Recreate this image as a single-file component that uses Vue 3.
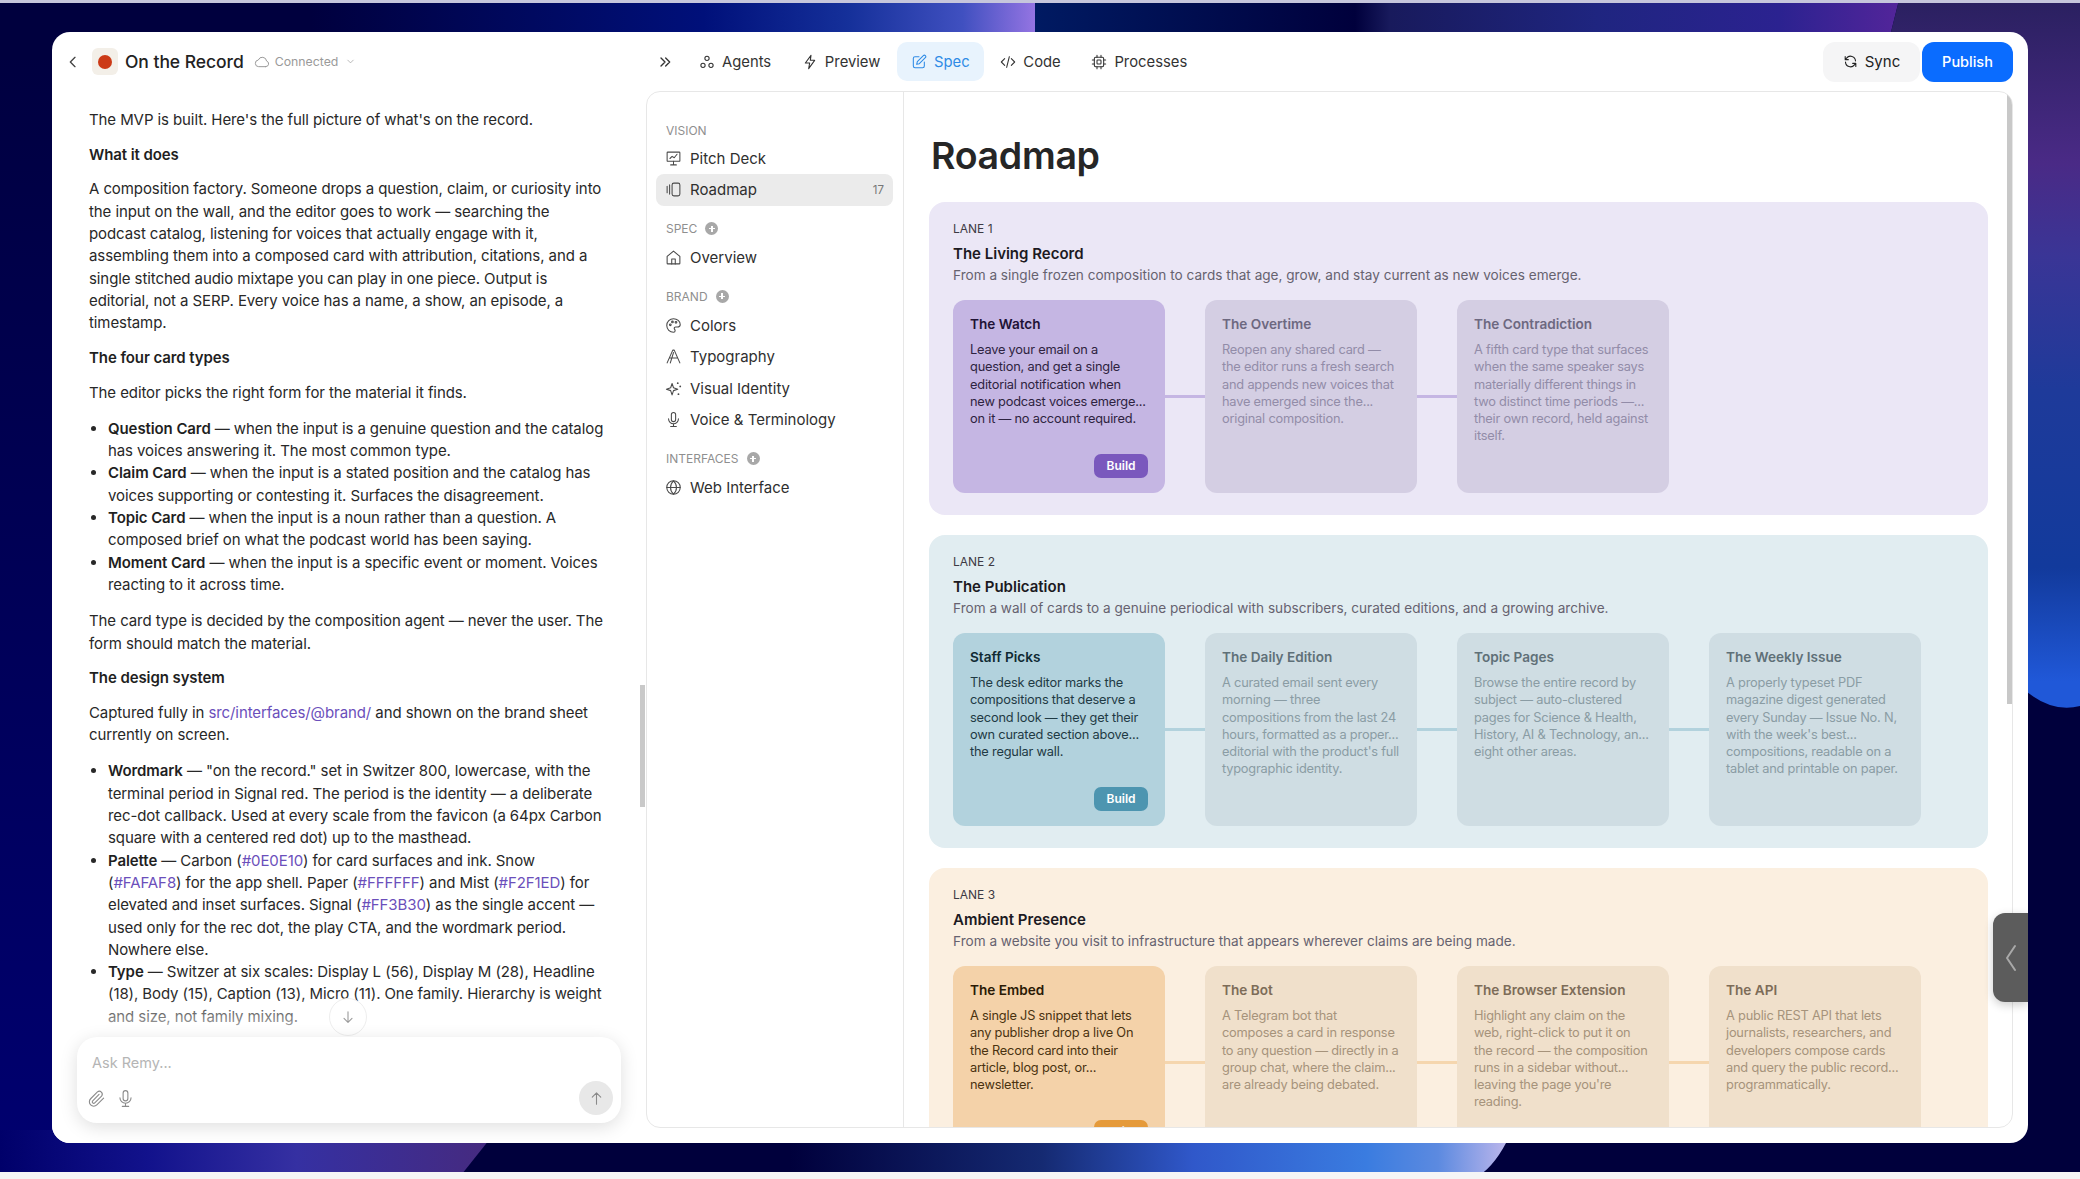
<template>
  <div class="page">
    <svg class="backdrop" viewBox="0 0 2080 1179" preserveAspectRatio="none" aria-hidden="true">
      <defs>
        <linearGradient id="topLeft" gradientUnits="userSpaceOnUse" x1="0" y1="0" x2="1035" y2="0">
          <stop offset="0" stop-color="#00003e" />
          <stop offset="0.3" stop-color="#00003e" />
          <stop offset="0.68" stop-color="#00107a" />
          <stop offset="0.82" stop-color="#15309a" />
          <stop offset="0.93" stop-color="#4050c0" />
          <stop offset="1" stop-color="#9474e2" />
        </linearGradient>
        <linearGradient id="topMid" gradientUnits="userSpaceOnUse" x1="1035" y1="0" x2="1900" y2="0">
          <stop offset="0" stop-color="#001a62" />
          <stop offset="0.37" stop-color="#00003c" />
          <stop offset="0.41" stop-color="#181a5c" />
          <stop offset="0.65" stop-color="#1f2580" />
          <stop offset="0.86" stop-color="#2b2290" />
          <stop offset="1" stop-color="#53259a" />
        </linearGradient>
        <linearGradient id="rightSide" gradientUnits="userSpaceOnUse" x1="0" y1="0" x2="0" y2="710">
          <stop offset="0" stop-color="#2a2060" />
          <stop offset="0.23" stop-color="#4a2a86" />
          <stop offset="0.36" stop-color="#3a3596" />
          <stop offset="0.55" stop-color="#1e3a9a" />
          <stop offset="0.8" stop-color="#123a9c" />
          <stop offset="0.96" stop-color="#2058d8" />
        </linearGradient>
        <linearGradient id="leftSide" gradientUnits="userSpaceOnUse" x1="0" y1="0" x2="0" y2="1179">
          <stop offset="0" stop-color="#00003e" />
          <stop offset="1" stop-color="#000070" />
        </linearGradient>
        <linearGradient id="botLeft" gradientUnits="userSpaceOnUse" x1="0" y1="0" x2="495" y2="0">
          <stop offset="0" stop-color="#00006a" />
          <stop offset="0.3" stop-color="#12128c" />
          <stop offset="0.6" stop-color="#3530a2" />
          <stop offset="1" stop-color="#462a7e" />
        </linearGradient>
        <linearGradient id="botMid" gradientUnits="userSpaceOnUse" x1="790" y1="0" x2="1510" y2="0">
          <stop offset="0" stop-color="#00003c" />
          <stop offset="0.35" stop-color="#152a72" />
          <stop offset="0.56" stop-color="#3058ca" />
          <stop offset="0.8" stop-color="#3a7ce0" />
          <stop offset="0.9" stop-color="#5c8ae0" />
          <stop offset="1" stop-color="#c0b8ec" />
        </linearGradient>
      </defs>
      <rect width="2080" height="1179" fill="#00003c" />
      <rect width="60" height="1179" fill="url(#leftSide)" />
      <path d="M0 0H1035V60H0Z" fill="url(#topLeft)" />
      <path d="M1035 0H1899L1884 60H1035Z" fill="url(#topMid)" />
      <path d="M1899 0H2080V706Q2050 714 2020 686V60H1884Z" fill="url(#rightSide)" />
      <path d="M0 1130H497L458 1179H0Z" fill="url(#botLeft)" />
      <path d="M790 1130H1512Q1510 1138 1506 1143Q1476 1200 1424 1179H790Z" fill="url(#botMid)" />
      <rect width="2080" height="3" fill="#c6c6dc" />
      <rect y="1172" width="2080" height="7" fill="#f5f5f6" />
    </svg>

    <div class="window">
      <section class="chat">
        <header class="chat-head">
          <svg class="back" viewBox="0 0 24 24"><path d="M15 5l-7 7 7 7" /></svg>
          <span class="logo"><i></i></span>
          <span class="project">On the Record</span>
          <span class="status">
            <svg viewBox="0 0 24 24"><path d="M17.5 19H7a5 5 0 0 1-.6-9.96A6.5 6.5 0 0 1 18.9 10.6 4.3 4.3 0 0 1 17.5 19z" /></svg>
            Connected
            <svg class="caret" viewBox="0 0 24 24"><path d="M6 9l6 6 6-6" /></svg>
          </span>
        </header>

        <div class="messages">
          <p>The MVP is built. Here's the full picture of what's on the record.</p>
          <p><b>What it does</b></p>
          <p>A composition factory. Someone drops a question, claim, or curiosity into the input on the wall, and the editor goes to work — searching the podcast catalog, listening for voices that actually engage with it, assembling them into a composed card with attribution, citations, and a single stitched audio mixtape you can play in one piece. Output is editorial, not a SERP. Every voice has a name, a show, an episode, a timestamp.</p>
          <p><b>The four card types</b></p>
          <p>The editor picks the right form for the material it finds.</p>
          <ul>
            <li><b>Question Card</b> — when the input is a genuine question and the catalog has voices answering it. The most common type.</li>
            <li><b>Claim Card</b> — when the input is a stated position and the catalog has voices supporting or contesting it. Surfaces the disagreement.</li>
            <li><b>Topic Card</b> — when the input is a noun rather than a question. A composed brief on what the podcast world has been saying.</li>
            <li><b>Moment Card</b> — when the input is a specific event or moment. Voices reacting to it across time.</li>
          </ul>
          <p>The card type is decided by the composition agent — never the user. The form should match the material.</p>
          <p><b>The design system</b></p>
          <p>Captured fully in <a>src/interfaces/@brand/</a> and shown on the brand sheet currently on screen.</p>
          <ul>
            <li><b>Wordmark</b> — "on the record." set in Switzer 800, lowercase, with the terminal period in Signal red. The period is the identity — a deliberate rec-dot callback. Used at every scale from the favicon (a 64px Carbon square with a centered red dot) up to the masthead.</li>
            <li><b>Palette</b> — Carbon (<a>#0E0E10</a>) for card surfaces and ink. Snow (<a>#FAFAF8</a>) for the app shell. Paper (<a>#FFFFFF</a>) and Mist (<a>#F2F1ED</a>) for elevated and inset surfaces. Signal (<a>#FF3B30</a>) as the single accent — used only for the rec dot, the play CTA, and the wordmark period. Nowhere else.</li>
            <li><b>Type</b> — Switzer at six scales: Display L (56), Display M (28), Headline (18), Body (15), Caption (13), Micro (11). One family. Hierarchy is weight and size, not family mixing.</li>
          </ul>
        </div>

        <div class="fade"></div>
        <div class="chat-scroll"></div>
        <button class="jump">
          <svg viewBox="0 0 24 24"><path d="M12 4v16M6 14l6 6 6-6" /></svg>
        </button>

        <div class="composer">
          <div class="placeholder">Ask Remy...</div>
          <div class="composer-row">
            <svg viewBox="0 0 24 24"><path d="M21 11.500l-8.600 8.600a5.500 5.500 0 0 1-7.800-7.800l8.600-8.600a3.700 3.700 0 0 1 5.200 5.200l-8.600 8.600a1.800 1.800 0 0 1-2.600-2.600l8-8" /></svg>
            <svg viewBox="0 0 24 24"><rect x="9" y="2" width="6" height="13" rx="3" /><path d="M5 11a7 7 0 0 0 14 0M12 18v4M8 22h8" /></svg>
            <span class="send"><svg viewBox="0 0 24 24"><path d="M12 20V4M6 10l6-6 6 6" /></svg></span>
          </div>
        </div>
      </section>

      <section class="work">
        <nav class="tabs">
          <svg class="collapse" viewBox="0 0 24 24"><path d="M6 6l6 6-6 6M13 6l6 6-6 6" /></svg>
          <a v-for="t in tabs" :key="t.name" class="tab" :class="{ on: t.name === 'Spec' }">
            <svg viewBox="0 0 24 24" v-html="t.icon"></svg>
            {{ t.name }}
          </a>
          <span class="grow"></span>
          <button class="sync">
            <svg viewBox="0 0 24 24"><path d="M20 11a8 8 0 0 0-14.300-4.400L3.500 9M3.500 4v5h5M4 13a8 8 0 0 0 14.300 4.400l2.200-2.400M20.500 20v-5h-5" /></svg>
            Sync
          </button>
          <button class="publish">Publish</button>
        </nav>

        <div class="panel">
          <aside class="side">
            <div v-for="g in groups" :key="g.name" class="group">
              <div class="group-name">
                {{ g.name }}
                <span v-if="g.plus" class="plus"></span>
              </div>
              <a v-for="it in g.items" :key="it.name" class="item" :class="{ on: it.count }">
                <svg viewBox="0 0 24 24" v-html="it.icon"></svg>
                {{ it.name }}
                <em v-if="it.count">{{ it.count }}</em>
              </a>
            </div>
          </aside>

          <main class="doc">
            <h1>Roadmap</h1>
            <section v-for="l in lanes" :key="l.label" class="lane" :class="l.tone">
              <div class="lane-label">{{ l.label }}</div>
              <h2>{{ l.title }}</h2>
              <p class="lane-desc">{{ l.desc }}</p>
              <div class="cards">
                <article v-for="(c, i) in l.cards" :key="c.title" class="card" :class="{ now: i === 0 }">
                  <h3>{{ c.title }}</h3>
                  <p>{{ c.text }}</p>
                  <span v-if="i === 0" class="badge">Build</span>
                </article>
              </div>
            </section>
          </main>
          <div class="doc-scroll"></div>
        </div>
      </section>

      <div class="handle">
        <svg viewBox="0 0 12 28"><path d="M10 2L2 14l8 12" /></svg>
      </div>
    </div>
  </div>
</template>

<script setup>
const icons = {
  agents: '<circle cx="12" cy="6.5" r="3.2"/><circle cx="6" cy="17" r="3.2"/><circle cx="18" cy="17" r="3.2"/>',
  zap: '<path d="M13.5 2L5 13.5h6.5L10 22l9-12.5h-6.5z"/>',
  pen: '<path d="M12 4H6a2.5 2.5 0 0 0-2.5 2.5V18A2.5 2.5 0 0 0 6 20.500h11.500A2.500 2.500 0 0 0 20 18v-6"/><path d="M18.500 2.500a2.100 2.100 0 0 1 3 3L12.500 14.500l-4 1 1-4z"/>',
  code: '<path d="M7 7l-5 5 5 5M17 7l5 5-5 5M14 4l-4 16"/>',
  cpu: '<rect x="5" y="5" width="14" height="14" rx="2"/><rect x="9" y="9" width="6" height="6" rx="1"/><path d="M9 2v3M15 2v3M9 19v3M15 19v3M2 9h3M2 15h3M19 9h3M19 15h3"/>',
  deck: '<rect x="3" y="3" width="18" height="13" rx="1"/><path d="M7 12l3-3 3 2 4-5M12 16v5M8 21h8"/>',
  road: '<path d="M3 7.500v9M6.500 5.500v13"/><rect x="10" y="3" width="11" height="18" rx="2.500"/>',
  home: '<path d="M3 10.500L12 3l9 7.500V20a1 1 0 0 1-1 1H4a1 1 0 0 1-1-1z"/><path d="M9.500 21v-7h5v7"/>',
  palette: '<path d="M12 2.500a9.500 9.500 0 0 0 0 19c1.500 0 2.300-1 2.300-2.200 0-1.600-1.300-2-1.300-3.300 0-1.100.9-1.800 2-1.800h2.500c2.300 0 4-1.700 4-3.700C21.500 6 17.200 2.500 12 2.500z"/><circle cx="7.500" cy="11" r="1.200"/><circle cx="10.500" cy="7" r="1.200"/><circle cx="15.500" cy="7.500" r="1.200"/>',
  type: '<path d="M3 21L11 3h2l8 18M7 14h10M12 6.500L7.500 21"/>',
  spark: '<path d="M10 5l2 6 6 2-6 2-2 6-2-6-6-2 6-2z"/><path d="M18 4.500v.01M21.500 9v.01M19 20v.01" stroke-width="2.600"/>',
  mic: '<rect x="9" y="2" width="6" height="13" rx="3"/><path d="M5 11a7 7 0 0 0 14 0M12 18v4M8 22h8"/>',
  globe: '<circle cx="12" cy="12" r="9.500"/><path d="M2.500 12h19M12 2.500c3 2.800 4.200 6 4.200 9.500s-1.200 6.700-4.200 9.500c-3-2.800-4.200-6-4.200-9.500s1.200-6.700 4.200-9.500z"/>'
}

const tabs = [
  { name: 'Agents', icon: icons.agents },
  { name: 'Preview', icon: icons.zap },
  { name: 'Spec', icon: icons.pen },
  { name: 'Code', icon: icons.code },
  { name: 'Processes', icon: icons.cpu }
]

const groups = [
  { name: 'VISION', items: [{ name: 'Pitch Deck', icon: icons.deck }, { name: 'Roadmap', icon: icons.road, count: 17 }] },
  { name: 'SPEC', plus: true, items: [{ name: 'Overview', icon: icons.home }] },
  {
    name: 'BRAND',
    plus: true,
    items: [
      { name: 'Colors', icon: icons.palette },
      { name: 'Typography', icon: icons.type },
      { name: 'Visual Identity', icon: icons.spark },
      { name: 'Voice & Terminology', icon: icons.mic }
    ]
  },
  { name: 'INTERFACES', plus: true, items: [{ name: 'Web Interface', icon: icons.globe }] }
]

const lanes = [
  {
    label: 'LANE 1',
    tone: 'violet',
    title: 'The Living Record',
    desc: 'From a single frozen composition to cards that age, grow, and stay current as new voices emerge.',
    cards: [
      { title: 'The Watch', text: 'Leave your email on a question, and get a single editorial notification when new podcast voices emerge... on it — no account required.' },
      { title: 'The Overtime', text: 'Reopen any shared card — the editor runs a fresh search and appends new voices that have emerged since the... original composition.' },
      { title: 'The Contradiction', text: 'A fifth card type that surfaces when the same speaker says materially different things in two distinct time periods —... their own record, held against itself.' }
    ]
  },
  {
    label: 'LANE 2',
    tone: 'teal',
    title: 'The Publication',
    desc: 'From a wall of cards to a genuine periodical with subscribers, curated editions, and a growing archive.',
    cards: [
      { title: 'Staff Picks', text: 'The desk editor marks the compositions that deserve a second look — they get their own curated section above... the regular wall.' },
      { title: 'The Daily Edition', text: "A curated email sent every morning — three compositions from the last 24 hours, formatted as a proper... editorial with the product's full typographic identity." },
      { title: 'Topic Pages', text: 'Browse the entire record by subject — auto-clustered pages for Science & Health, History, AI & Technology, an... eight other areas.' },
      { title: 'The Weekly Issue', text: "A properly typeset PDF magazine digest generated every Sunday — Issue No. N, with the week's best... compositions, readable on a tablet and printable on paper." }
    ]
  },
  {
    label: 'LANE 3',
    tone: 'amber',
    title: 'Ambient Presence',
    desc: 'From a website you visit to infrastructure that appears wherever claims are being made.',
    cards: [
      { title: 'The Embed', text: 'A single JS snippet that lets any publisher drop a live On the Record card into their article, blog post, or... newsletter.' },
      { title: 'The Bot', text: 'A Telegram bot that composes a card in response to any question — directly in a group chat, where the claim... are already being debated.' },
      { title: 'The Browser Extension', text: "Highlight any claim on the web, right-click to put it on the record — the composition runs in a sidebar without... leaving the page you're reading." },
      { title: 'The API', text: 'A public REST API that lets journalists, researchers, and developers compose cards and query the public record... programmatically.' }
    ]
  }
]
</script>

<style scoped>
.page { position:relative; width:2080px; height:1179px; padding:32px 52px 36px; box-sizing:border-box; overflow:hidden;
  font-family:Inter, "Liberation Sans", sans-serif; color:#2b2b2b }
.backdrop { position:absolute; inset:0; width:100%; height:100%; stroke:none }
.window { position:relative; display:flex; height:100%; background:#fff; border-radius:18px; overflow:hidden }
svg { fill:none; stroke:currentColor; stroke-width:1.6; stroke-linecap:round; stroke-linejoin:round; flex:none }
.backdrop { stroke:none }

.chat { position:relative; width:594px; flex:none; overflow:hidden }
.chat-head { display:flex; align-items:center; height:59px; padding-left:13px; box-sizing:border-box }
.back { width:16px; height:16px; color:#444; stroke-width:2 }
.logo { display:flex; align-items:center; justify-content:center; width:26px; height:27px; margin-left:11px; background:#f3efe8; border-radius:6px }
.logo i { width:14px; height:14px; background:#cc3a17; border-radius:50% }
.project { margin-left:7px; font-size:17.500px; font-weight:500; color:#222; letter-spacing:-.05px }
.status { display:flex; align-items:center; gap:5px; margin-left:10px; font-size:12.300px; color:#9a9a9a }
.status svg { width:16px; height:16px; stroke-width:1.5 }
.status .caret { width:11px; height:11px; margin-left:2px }

.messages { width:521px; padding:18px 0 0 37px; font-size:15px; line-height:22.300px; letter-spacing:-.09px; color:#282828 }
.messages p { margin:0 0 12.400px }
.messages b { font-weight:600; color:#1f1f1f }
.messages a { color:#6b4fbb }
.messages ul { margin:14px 0; padding-left:19px }

.fade { position:absolute; left:0; right:0; bottom:0; height:148px;
  background:linear-gradient(to bottom, rgba(255,255,255,0), #fff 38%) }
.chat-scroll { position:absolute; left:588px; top:653px; width:5px; height:122px; background:#c9c9c9 }
.jump { position:absolute; left:277px; top:966px; display:flex; align-items:center; justify-content:center; width:38px; height:38px; padding:0;
  background:rgba(255,255,255,.75); border:1px solid #eee; border-radius:50%; color:#999 }
.jump svg { width:16px; height:16px }

.composer { position:absolute; left:25px; bottom:20px; width:544px; height:86px; box-sizing:border-box; padding:17px 8px 7px 15px;
  background:#fff; border-radius:20px; box-shadow:0 4px 18px rgba(0,0,0,.13) }
.placeholder { font-size:14.500px; line-height:18px; color:#b5b5b5 }
.composer-row { display:flex; align-items:center; gap:10px; margin:9px 0 0 -5px; color:#8b8b8b }
.composer-row > svg { width:19px; height:19px; stroke-width:1.4 }
.send { display:flex; align-items:center; justify-content:center; width:34px; height:34px; margin-left:auto; background:#e8e8e8; border-radius:50%; color:#8a8a8a }
.send svg { width:17px; height:17px; stroke-width:1.5 }

.work { flex:1; display:flex; flex-direction:column; min-width:0; padding:0 15px 15px 0 }
.tabs { display:flex; align-items:center; height:59px; flex:none; box-sizing:border-box }
.collapse { width:16px; height:16px; margin:0 12px 0 11px; color:#333; stroke-width:2 }
.tab { display:flex; align-items:center; gap:7px; height:39px; padding:0 14px; margin-right:2.700px; font-size:14.800px; color:#333; border-radius:10px }
.tab svg { width:16px; height:16px; stroke-width:1.6 }
.tab.on { background:#e8f3fd; color:#2f8be6 }
.grow { flex:1 }
.sync { display:flex; align-items:center; gap:7px; width:97px; height:40px; justify-content:center; background:#f5f5f6; border:0; border-radius:12px;
  font:400 15px Inter, sans-serif; color:#222 }
.sync svg { width:15px; height:15px; stroke-width:1.7 }
.publish { width:91px; height:40px; margin-left:2px; background:#0a6cff; border:0; border-radius:12px; font:500 14.500px Inter, sans-serif; color:#fff }

.panel { position:relative; flex:1; display:flex; min-height:0; border:1px solid #e7e7e7; border-radius:14px; overflow:hidden }
.side { width:257px; flex:none; box-sizing:border-box; padding:30.500px 10px 0 9px; border-right:1px solid #e7e7e7 }
.group { margin-bottom:15px }
.group:first-child .group-name { margin-bottom:4px }
.group-name { display:flex; align-items:center; gap:8px; height:16px; margin:0 0 5px 10px; font-size:12px; color:#8f8f8f }
.plus { position:relative; width:13px; height:13px; background:#a8a8a8; border-radius:50% }
.plus::before { content:""; position:absolute; left:3.500px; top:5.750px; width:6px; height:1.500px; background:#fff }
.plus::after { content:""; position:absolute; left:5.750px; top:3.500px; width:1.500px; height:6px; background:#fff }
.item { display:flex; align-items:center; gap:8px; height:31.600px; padding:0 9px; font-size:15px; color:#2f2f2f; border-radius:8px }
.item svg { width:17px; height:17px; color:#4a4a4a; stroke-width:1.5 }
.item em { margin-left:auto; font-style:normal; font-size:11.500px; color:#777 }
.item.on { background:#ebebeb }

.doc { flex:1; min-width:0; padding:40px 24px 0 25px; overflow:hidden }
h1 { margin:0 0 22px 2px; font-size:37.500px; line-height:48px; font-weight:600; letter-spacing:-.3px; color:#262626 }
.lane { height:313px; box-sizing:border-box; padding:19px 24px 0; margin-bottom:20px; border-radius:16px }
.lane-label { font-size:12px; line-height:16px; color:#3d3a44 }
h2 { margin:8px 0 0; font-size:15px; line-height:18px; font-weight:600; color:#1c1a22 }
.lane-desc { margin:3px 0 0; font-size:13.600px; line-height:18px; color:#66626f }
.cards { display:flex; gap:40px; margin-top:16px }
.card { position:relative; width:212px; height:193px; flex:none; box-sizing:border-box; padding:15px 18px 0 17px; border-radius:12px; background:var(--dim) }
.card:not(:last-child)::after { content:""; position:absolute; left:100%; top:95px; width:40px; height:3px; background:var(--line) }
.card.now { background:var(--strong) }
h3 { margin:0; font-size:13.600px; line-height:18px; font-weight:600; color:var(--dim-title) }
.card p { margin:8px 0 0; font-size:12.800px; line-height:17.300px; letter-spacing:-.2px; color:var(--dim-text) }
.card.now h3 { color:var(--ink) }
.card.now p { color:var(--ink-soft) }
.badge { position:absolute; right:17px; bottom:15px; width:54px; height:24px; line-height:24px; text-align:center; background:var(--badge); border-radius:7px; font-size:12px; font-weight:600; color:#fff }

.violet { background:#ebe7f6; --dim:#d4cee3; --strong:#c5b6e3; --line:#c5b6e3; --badge:#7a58bd; --ink:#1f1235; --ink-soft:#2e2340; --dim-title:#6d6880; --dim-text:#928ca8 }
.teal { background:#e1edf1; --dim:#cfdde3; --strong:#b2d2dd; --line:#b2d2dd; --badge:#4d95b0; --ink:#0f2a33; --ink-soft:#1f3a44; --dim-title:#5f7078; --dim-text:#8a9ca4 }
.amber { background:#fbefe0; --dim:#f0e0cb; --strong:#f4d2a9; --line:#f5d6ae; --badge:#e59a3a; --ink:#2a1a05; --ink-soft:#4a3210; --dim-title:#7d6c58; --dim-text:#a6937b }

.doc-scroll { position:absolute; right:0; top:0; width:5px; height:612px; background:#c8c8c8 }

.handle { position:absolute; right:0; top:881px; display:flex; align-items:center; justify-content:center; width:35px; height:89px; background:#5c5c5c;
  border-radius:12px 0 0 12px; box-shadow:0 3px 10px rgba(0,0,0,.2); color:#a9a9a9 }
.handle svg { width:12px; height:28px; stroke-width:2 }
</style>
